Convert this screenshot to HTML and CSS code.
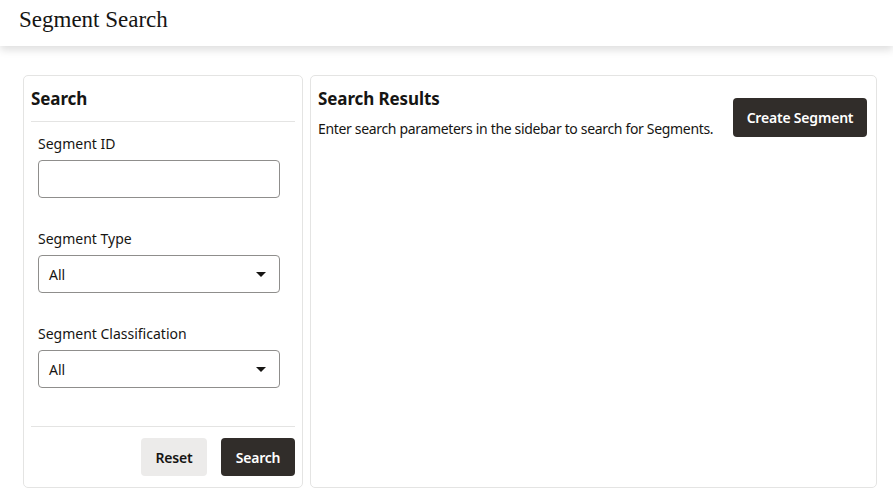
FILE: index.html
```html
<!DOCTYPE html>
<html lang="en">
<head>
<meta charset="utf-8">
<title>Segment Search</title>
<link rel="stylesheet" href="styles.css">
</head>
<body>
<header class="topbar">
  <h1 class="page-title">Segment Search</h1>
</header>
<main class="layout">
  <aside class="card sidebar">
    <h2 class="card-title">Search</h2>
    <div class="form">
      <div class="field">
        <label class="field-label">Segment ID</label>
        <div class="control"></div>
      </div>
      <div class="field">
        <label class="field-label">Segment Type</label>
        <div class="control select"><span>All</span><svg class="caret" width="10" height="5" viewBox="0 0 10 5"><path d="M0 0h10L5 5z" fill="#161513"/></svg></div>
      </div>
      <div class="field">
        <label class="field-label">Segment Classification</label>
        <div class="control select"><span>All</span><svg class="caret" width="10" height="5" viewBox="0 0 10 5"><path d="M0 0h10L5 5z" fill="#161513"/></svg></div>
      </div>
    </div>
    <div class="actions">
      <button class="btn btn-light">Reset</button>
      <button class="btn btn-dark">Search</button>
    </div>
  </aside>
  <section class="card results">
    <div class="results-text">
      <h2 class="card-title">Search Results</h2>
      <p class="hint">Enter search parameters in the sidebar to search for Segments.</p>
    </div>
    <button class="btn btn-dark btn-create">Create Segment</button>
  </section>
</main>
</body>
</html>
```

FILE: styles.css
```css
* { box-sizing: border-box; }
body {
  margin: 0;
  background: #ffffff;
  color: #161513;
  font-family: "Noto Sans", "Open Sans", sans-serif;
  font-size: 14px;
}
.topbar {
  height: 46px;
  padding: 0 19px;
  display: flex;
  align-items: center;
  background: #fff;
  box-shadow: 0 4px 8px rgba(0,0,0,0.13);
  position: relative;
}
.page-title {
  margin: 0;
  margin-top: -6px;
  font-family: "Liberation Serif", serif;
  font-weight: normal;
  font-size: 23px;
  color: #161513;
}
.layout {
  display: flex;
  gap: 7px;
  padding: 29px 16px 0 23px;
}
.card {
  border: 1px solid #e4e4e3;
  border-radius: 5px;
  height: 413px;
  background: #fff;
}
.sidebar {
  width: 280px;
  padding: 0 7px 0 7px;
  display: flex;
  flex-direction: column;
}
.card-title {
  margin: 0;
  font-size: 17px;
  font-weight: 700;
  line-height: 24px;
  letter-spacing: -0.1px;
}
.sidebar .card-title {
  padding: 11px 0 10px;
  border-bottom: 1px solid #e4e4e3;
}
.form {
  padding: 12px 15px 0 7px;
  flex: 1;
  border-bottom: 1px solid #e4e4e3;
}
.field { margin-bottom: 31px; }
.field:last-child { margin-bottom: 0; }
.field-label {
  display: block;
  line-height: 20px;
  margin-bottom: 6px;
}
.control {
  height: 38px;
  border: 1px solid #8f8e8c;
  border-radius: 4px;
  background: #fff;
}
.select {
  display: flex;
  align-items: center;
  justify-content: space-between;
  padding: 0 13px 0 10px;
}
.caret { display: block; }
.actions {
  display: flex;
  justify-content: flex-end;
  gap: 14px;
  padding: 11px 0 11px;
}
.btn {
  height: 38px;
  border: none;
  border-radius: 4px;
  font-family: inherit;
  font-size: 14px;
  font-weight: 600;
  padding: 0;
  white-space: nowrap;
  letter-spacing: -0.2px;
  cursor: pointer;
}
.btn-light { background: #ecebea; color: #161513; width: 66px; }
.btn-dark { background: #312d2a; color: #fff; }
.actions .btn-dark { width: 74px; }
.results {
  flex: 1;
  display: flex;
  justify-content: space-between;
  align-items: flex-start;
  padding: 11px 9px 0 7px;
}
.results-text { min-width: 0; }
.hint {
  margin: 8px 0 0;
  line-height: 20px;
  white-space: nowrap;
  letter-spacing: -0.33px;
}
.btn-create {
  flex-shrink: 0;
  margin-top: 11px;
  height: 39px;
  width: 134px;
}
```
